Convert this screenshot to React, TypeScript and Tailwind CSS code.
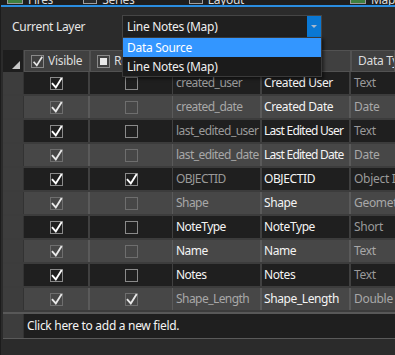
import React from "react";

type Row = {
  name: string;
  alias: string;
  type: string;
  ro: boolean;
  nameWhite: boolean;
};

const rows: Row[] = [
  { name: "created_user", alias: "Created User", type: "Text", ro: false, nameWhite: false },
  { name: "created_date", alias: "Created Date", type: "Date", ro: false, nameWhite: false },
  { name: "last_edited_user", alias: "Last Edited User", type: "Text", ro: false, nameWhite: false },
  { name: "last_edited_date", alias: "Last Edited Date", type: "Date", ro: false, nameWhite: false },
  { name: "OBJECTID", alias: "OBJECTID", type: "Object ID", ro: true, nameWhite: false },
  { name: "Shape", alias: "Shape", type: "Geometry", ro: false, nameWhite: false },
  { name: "NoteType", alias: "NoteType", type: "Short", ro: false, nameWhite: true },
  { name: "Name", alias: "Name", type: "Text", ro: false, nameWhite: true },
  { name: "Notes", alias: "Notes", type: "Text", ro: false, nameWhite: true },
  { name: "Shape_Length", alias: "Shape_Length", type: "Double", ro: true, nameWhite: false },
];

function Check({ checked, light }: { checked: boolean; light: boolean }) {
  return (
    <div
      className={
        "w-[13px] h-[13px] border relative " +
        (light ? "border-[#6e6e6e] bg-[#474747]" : "border-[#8a8a8a] bg-[#1f1f1f]")
      }
    >
      {checked && (
        <svg width="13" height="13" viewBox="0 0 13 13" className="absolute left-[-1px] top-[-1px]">
          <path
            d="M2.6 6.8 L5.8 10.4 L11.2 1.8"
            fill="none"
            stroke={light ? "#e8e8e8" : "#ffffff"}
            strokeWidth="1.9"
            strokeLinecap="square"
            strokeLinejoin="miter"
          />
        </svg>
      )}
    </div>
  );
}

function TabIcon({ kind }: { kind: "map" | "table" }) {
  if (kind === "map") {
    return <div className="w-[16px] h-[12px] border border-[#9a9a9a] bg-[#3f7f3f] mb-[1px]" />;
  }
  return <div className="w-[15px] h-[12px] border border-[#a0a0a0] bg-[#2b2b2b] mb-[1px]" />;
}

export default function App() {
  const font = "font-['Segoe_UI','Noto_Sans','Open_Sans',sans-serif] tracking-[-0.3px]";
  return (
    <div className={"w-[395px] h-[355px] bg-[#2b2b2b] overflow-hidden relative text-[12px] leading-none " + font}>
      {/* tab strip, mostly cut off */}
      <div className="h-[5px] bg-[#1e1e1e] overflow-hidden relative">
        <div className="flex items-end h-[5px] text-[#dcdcdc] text-[12px] leading-[12px]">
          <div className="flex items-end gap-[5px] ml-[7px]">
            <TabIcon kind="map" />
            <span className="mb-[-1px]">Fires</span>
          </div>
          <div className="flex items-end gap-[5px] ml-[30px]">
            <TabIcon kind="table" />
            <span className="mb-[-1px]">Map Series</span>
          </div>
          <div className="flex items-end gap-[5px] ml-[31px]">
            <TabIcon kind="table" />
            <span className="mb-[-1px]">Summary Data Layout</span>
          </div>
          <div className="flex items-end gap-[5px] ml-[30px]">
            <TabIcon kind="map" />
            <span className="mb-[-1px]">Map</span>
          </div>
        </div>
      </div>
      <div className="h-[2px] bg-[#2a8de0] ml-[1px]" />

      {/* current layer row */}
      <div className="flex items-center h-[30px] mt-[5px]">
        <div className="ml-[12px] w-[110px] text-[#e6e6e6]">Current Layer</div>
        <div className="flex w-[200px] h-[24px] border border-[#454545] bg-[#1f1f1f]">
          <div className="flex-1 flex items-center pl-[4px] text-[#f0f0f0]">Line Notes (Map)</div>
          <div className="w-[14px] h-full bg-[#0a78d4] flex items-center justify-center">
            <svg width="6" height="4" viewBox="0 0 6 4">
              <path d="M0 0 L6 0 L3 3 Z" fill="#a9b9cc" />
            </svg>
          </div>
        </div>
      </div>

      {/* dropdown list */}
      <div className="absolute left-[122px] top-[37px] w-[200px] h-[40px] bg-[#1b1b1b] border border-[#3a3a3a] z-10 shadow-[2px_2px_3px_rgba(0,0,0,0.5)]">
        <div className="h-[19px] bg-[#3396ff] text-[#ffffff] flex items-center pl-[4px]">Data Source</div>
        <div className="h-[19px] text-[#f0f0f0] flex items-center pl-[4px]">Line Notes (Map)</div>
      </div>

      {/* grid */}
      <div className="ml-[3px] mt-[8px] flex flex-col">
        {/* header */}
        <div className="flex h-[22px]">
          <div className="w-[21px] bg-[#1e1e1e] border-r border-[#3a3a3a] relative">
            <svg width="8" height="8" viewBox="0 0 8 8" className="absolute right-[3px] bottom-[3px]">
              <path d="M8 0 L8 8 L0 8 Z" fill="#c8c8c8" />
            </svg>
          </div>
          <div className="w-[66px] bg-[#404040] border border-[#525252] flex items-center pl-[6px] gap-[4px]">
            <div className="w-[13px] h-[13px] border border-[#8a8a8a] relative">
              <svg width="13" height="13" viewBox="0 0 13 13" className="absolute left-[-1px] top-[-1px]">
                <path d="M2.6 6.8 L5.8 10.4 L11.2 1.8" fill="none" stroke="#e8e8e8" strokeWidth="1.7" />
              </svg>
            </div>
            <span className="text-[#dcdcdc]">Visible</span>
          </div>
          <div className="w-[83px] bg-[#404040] border border-[#525252] flex items-center pl-[6px] gap-[4px] overflow-hidden">
            <div className="w-[13px] h-[13px] border border-[#8a8a8a] flex items-center justify-center shrink-0">
              <div className="w-[7px] h-[7px] bg-[#e8e8e8]" />
            </div>
            <span className="text-[#dcdcdc] whitespace-nowrap">Read Only</span>
          </div>
          <div className="w-[89px] bg-[#404040] border border-[#525252] flex items-center pl-[5px] text-[#dcdcdc]">Field Name</div>
          <div className="w-[89px] bg-[#404040] border border-[#525252] flex items-center pl-[5px] text-[#dcdcdc]">Alias</div>
          <div className="flex-1 bg-[#404040] border border-[#525252] flex items-center pl-[6px] text-[#dcdcdc] whitespace-nowrap overflow-hidden">Data Type</div>
        </div>

        {rows.map((r, i) => {
          const light = i % 2 === 1;
          const bg = light ? "bg-[#474747]" : "bg-[#1f1f1f]";
          const vline = light ? "border-[#5a5a5a]" : "border-[#404040]";
          const gray = light ? "text-[#a8a8a8]" : "text-[#9a9a9a]";
          const aliasTrack = r.alias.length > 14 ? "tracking-[-0.75px]" : "tracking-[-0.4px]";
          return (
            <div key={r.name} className="flex h-[24px] border-b-2 border-[#3c3c3c] bg-[#3c3c3c]">
              <div className="w-[21px] bg-[#3d3d3d] border-r border-[#333333]" />
              <div className={"w-[66px] flex items-center justify-center border-r-2 " + bg + " " + vline}>
                <Check checked={true} light={light} />
              </div>
              <div className={"w-[83px] flex items-center justify-center border-r " + bg + " " + vline}>
                <Check checked={r.ro} light={light} />
              </div>
              <div className={"w-[89px] flex items-center pl-[3px] border-r-2 whitespace-nowrap overflow-hidden tracking-[-0.55px] " + bg + " " + vline + " " + (r.nameWhite ? "text-[#f4f4f4]" : gray)}>
                {r.name}
              </div>
              <div className={"w-[89px] flex items-center pl-[2px] border-r-2 whitespace-nowrap overflow-hidden text-[#f4f4f4] " + aliasTrack + " " + bg + " " + vline}>
                {r.alias}
              </div>
              <div className={"flex-1 flex items-center pl-[3px] whitespace-nowrap overflow-hidden " + bg + " " + gray}>
                {r.type}
              </div>
            </div>
          );
        })}

        <div className="h-[2px] bg-[#585858]" />
        <div className="flex h-[25px] border-b border-[#5a5a5a]">
          <div className="w-[21px] bg-[#3d3d3d] border-r border-[#333333]" />
          <div className="flex-1 bg-[#1f1f1f] flex items-center pl-[3px] text-[#f4f4f4] whitespace-nowrap">Click here to add a new field.</div>
        </div>
      </div>
      <div className="absolute left-0 top-0 w-[1px] h-full bg-[#1c1c1c]" />
    </div>
  );
}
